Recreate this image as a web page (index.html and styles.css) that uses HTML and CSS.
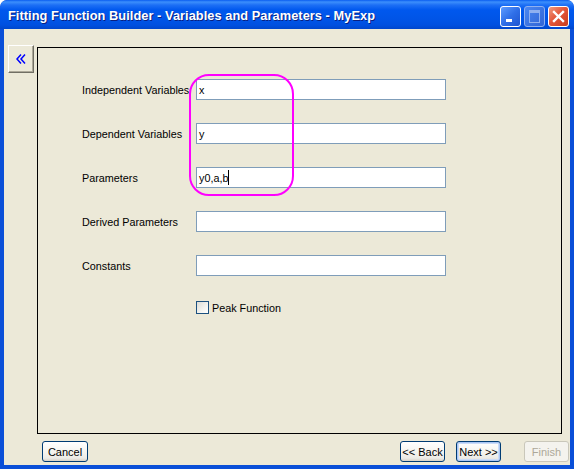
FILE: index.html
```html
<!DOCTYPE html>
<html>
<head>
<meta charset="utf-8">
<link rel="stylesheet" href="styles.css">
</head>
<body>
<div class="window">
  <div class="titlebar">
    <span class="title">Fitting Function Builder - Variables and Parameters - MyExp</span>
    <div class="ctrls">
      <div class="tbtn tmin"><span class="minbar"></span></div>
      <div class="tbtn tmax"><span class="maxbox"></span></div>
      <div class="tbtn tclose">
        <svg width="13" height="13" viewBox="0 0 13 13"><path d="M2 2 L11 11 M11 2 L2 11" stroke="#fff" stroke-width="2.4" stroke-linecap="square"/></svg>
      </div>
    </div>
  </div>
  <div class="client">
    <div class="main">
      <div class="collapse">
        <svg width="10" height="10" viewBox="0 0 10 10"><path d="M5 0.5 L1 5 L5 9.5 M9 0.5 L5 5 L9 9.5" fill="none" stroke="#0000ff" stroke-width="1.5"/></svg>
      </div>
      <div class="panel">
        <div class="form">
          <div class="row"><span class="lbl">Independent Variables</span><div class="field">x</div></div>
          <div class="row"><span class="lbl">Dependent Variables</span><div class="field">y</div></div>
          <div class="row"><span class="lbl">Parameters</span><div class="field">y0,a,b<span class="caret"></span></div></div>
          <div class="row"><span class="lbl">Derived Parameters</span><div class="field"></div></div>
          <div class="row"><span class="lbl">Constants</span><div class="field"></div></div>
          <div class="checkrow"><span class="check"></span><span class="checklbl">Peak Function</span></div>
        </div>
        <div class="highlight"></div>
      </div>
    </div>
    <div class="footer">
      <div class="btn cancel">Cancel</div>
      <div class="spacer"></div>
      <div class="btn">&lt;&lt; Back</div>
      <div class="btn default">Next &gt;&gt;</div>
      <div class="btn disabled">Finish</div>
    </div>
  </div>
</div>
</body>
</html>
```
FILE: styles.css
```css
html, body {
  margin: 0;
  padding: 0;
  background: #ffffff;
}
.window {
  width: 574px;
  height: 469px;
  box-sizing: border-box;
  display: flex;
  flex-direction: column;
  background: #0a4fd8;
  border-radius: 7px 7px 0 0;
  overflow: hidden;
}
.titlebar {
  height: 29px;
  flex: none;
  display: flex;
  align-items: center;
  justify-content: space-between;
  padding: 0 5px 0 8px;
  background: linear-gradient(to bottom, #0a5df0 0px, #3c8ffc 2px, #1d6ff5 5px, #0058ee 10px, #0054e6 20px, #0050e0 25px, #0046cc 29px);
  border-radius: 7px 7px 0 0;
}
.title {
  font-family: "Liberation Sans", Arial, sans-serif;
  font-weight: bold;
  font-size: 12.8px;
  color: #ffffff;
  text-shadow: 1px 1px 0 #0a1f80;
  margin-top: 1px;
  letter-spacing: 0.05px;
}
.ctrls {
  display: flex;
  gap: 3px;
  margin-top: 3px;
}
.tbtn {
  width: 19px;
  height: 19px;
  border: 1px solid #ffffff;
  border-radius: 3px;
  position: relative;
  box-sizing: content-box;
}
.tmin {
  background: linear-gradient(135deg, #5d9cff 0%, #2f6fe8 50%, #1f55d0 100%);
}
.minbar {
  position: absolute;
  left: 5px;
  top: 12px;
  width: 6px;
  height: 3px;
  background: #ffffff;
}
.tmax {
  background: linear-gradient(135deg, #4b87f2 0%, #3a72e0 60%, #3366d6 100%);
  border-color: #8fb0f0;
}
.maxbox {
  position: absolute;
  left: 4px;
  top: 3px;
  width: 9px;
  height: 9px;
  border: 1px solid #8fb0f0;
  border-top-width: 3px;
}
.tclose {
  background: linear-gradient(135deg, #f09b7f 0%, #e4573a 45%, #c93d1d 100%);
  display: flex;
  align-items: center;
  justify-content: center;
}
.client {
  flex: 1;
  margin: 0 4px 4px 4px;
  background: #ece9d8;
  display: flex;
  flex-direction: column;
  font-family: "Liberation Sans", Arial, sans-serif;
  font-size: 10.8px;
  color: #000000;
}
.main {
  display: flex;
  align-items: flex-start;
  padding: 16px 8px 0 4px;
}
.collapse {
  width: 24px;
  height: 26px;
  flex: none;
  display: flex;
  align-items: center;
  justify-content: center;
  background: #ece9d8;
  border-top: 1px solid #ffffff;
  border-left: 1px solid #ffffff;
  border-right: 1px solid #716f64;
  border-bottom: 1px solid #716f64;
  box-shadow: inset -1px -1px 0 #aca899;
  margin-right: 3px;
}
.collapse svg {
  margin-left: -1px;
}
.panel {
  position: relative;
  flex: 1;
  height: 385px;
  margin-top: 2px;
  border: 1px solid #000000;
}
.form {
  display: flex;
  flex-direction: column;
  padding: 31px 0 0 44px;
  gap: 23px;
}
.row {
  display: flex;
  align-items: center;
  height: 21px;
}
.lbl {
  width: 114px;
  flex: none;
  white-space: nowrap;
  margin-top: 1px;
}
.field {
  width: 246px;
  height: 19px;
  border: 1px solid #7f9db9;
  background: #ffffff;
  display: flex;
  align-items: center;
  padding-left: 2px;
  box-sizing: content-box;
  white-space: nowrap;
}
.caret {
  display: inline-block;
  width: 1px;
  height: 15px;
  background: #000000;
}
.checkrow {
  display: flex;
  align-items: center;
  margin-left: 114px;
  margin-top: 1px;
  height: 14px;
}
.check {
  width: 11px;
  height: 11px;
  border: 1px solid #1c5180;
  background: linear-gradient(135deg, #dcdcd7 0%, #f4f4f0 60%, #ffffff 100%);
  margin-right: 3px;
}
.checklbl {
  margin-top: 1px;
}
.highlight {
  position: absolute;
  left: 151px;
  top: 26px;
  width: 101px;
  height: 118px;
  border: 2px solid #ff00ff;
  border-radius: 20px;
}
.footer {
  display: flex;
  align-items: flex-start;
  padding: 7px 1px 0 38px;
}
.spacer {
  flex: 1;
}
.btn {
  width: 43px;
  height: 19px;
  border: 1px solid #003c74;
  border-radius: 3px;
  background: linear-gradient(to bottom, #ffffff 0%, #f6f5f0 50%, #ecebe6 85%, #d6d0c5 100%);
  display: flex;
  align-items: center;
  justify-content: center;
  font-size: 11px;
  white-space: nowrap;
}
.cancel {
  width: 44px;
}
.btn.default {
  margin-left: 11px;
  box-shadow: inset 0 0 0 1px #a9c6f5, inset 0 0 0 2px #ccdcf7;
}
.btn.disabled {
  margin-left: 23px;
  border-color: #c9c7ba;
  background: #f4f3ee;
  color: #aca899;
}
```
